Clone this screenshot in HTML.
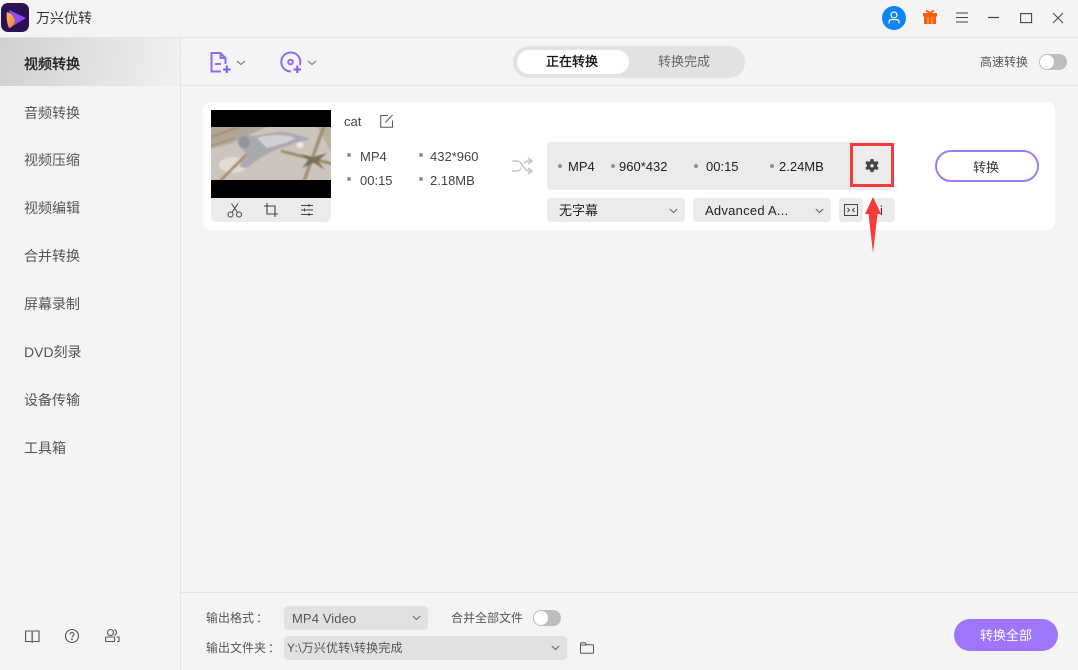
<!DOCTYPE html>
<html lang="zh-CN"><head><meta charset="utf-8"><title>万兴优转</title>
<style>
html,body{margin:0;padding:0}
body{width:1078px;height:670px;overflow:hidden;background:#f4f4f4;position:relative;font-family:"Liberation Sans","Noto Sans CJK SC",sans-serif;color:#333}
.a{position:absolute;white-space:nowrap}
.t{position:absolute;white-space:nowrap;font-size:13px;line-height:18px}
.nav{position:absolute;left:24px;font-size:14px;line-height:20px;color:#555;white-space:nowrap}
.dot{position:absolute;width:4px;height:4px;border-radius:50%;background:#909090}
.sel{position:absolute;background:#ebebeb;border-radius:4px}
svg{position:absolute;overflow:visible}
</style></head><body>

<div class="a" style="left:0;top:37px;width:1078px;height:1px;background:#e3e3e3"></div>
<div class="a" style="left:180px;top:38px;width:1px;height:632px;background:#e3e3e3"></div>
<div class="a" style="left:181px;top:85px;width:897px;height:1px;background:#e3e3e3"></div>
<div class="a" style="left:181px;top:592px;width:897px;height:1px;background:#e3e3e3"></div>
<div class="a" style="left:0;top:38px;width:180px;height:48px;background:linear-gradient(100deg,#d0d0d0,#e4e4e4 60%,#f0f0f0)"></div>

<!-- logo -->
<svg style="left:1px;top:3px" width="28" height="29" viewBox="0 0 28 29">
<defs><linearGradient id="lg" x1="0" y1="0" x2="1" y2="1"><stop offset="0" stop-color="#ffc05a"/><stop offset="1" stop-color="#f07a3c"/></linearGradient></defs>
<rect width="28" height="29" rx="7" fill="#2b1150"/>
<path d="M8 7 L25 15 L10 24 Z" fill="#8c4cf0"/>
<path d="M6 9 C11 11 14 15 14 18 C13 22 10 25 8 25 C6 20 5 14 6 9Z" fill="url(#lg)"/>
</svg>
<div class="a" style="left:36px;top:8px;font-size:14px;line-height:20px;color:#333">万兴优转</div>

<!-- window controls -->
<div class="a" style="left:882px;top:6px;width:24px;height:24px;border-radius:50%;background:#0d85f5"></div>
<svg style="left:882px;top:6px" width="24" height="24" fill="none" stroke="#fff" stroke-width="1.2"><circle cx="12" cy="9" r="3"/><path d="M7 17.500v-1.500c0-1.500 1-2.400 2.500-2.400h5c1.500 0 2.500 .9 2.500 2.400v1.500"/></svg>
<svg style="left:923px;top:10px" width="15" height="14"><path d="M0 3h14v3.500H0z" fill="#f4600c"/><path d="M1 6.500h12V14H1z" fill="#f4600c"/><path d="M3 .5l4 2.500 4-2.500" fill="none" stroke="#f4600c" stroke-width="1.800"/><path d="M5 7v7M9 7v7" stroke="#ffb070" stroke-width="1"/></svg>
<svg style="left:955px;top:11px" width="14" height="14" stroke="#444" stroke-width="1.1"><path d="M1 2h12M1 6.500h12M1 11h12"/></svg>
<svg style="left:988px;top:17px" width="12" height="2" stroke="#444" stroke-width="1.2"><path d="M0 .5h11"/></svg>
<svg style="left:1020px;top:13px" width="12" height="10" fill="none" stroke="#444" stroke-width="1.1"><rect x=".6" y=".6" width="11" height="9"/></svg>
<svg style="left:1052px;top:12px" width="12" height="12" stroke="#444" stroke-width="1"><path d="M1 1l10 10M11 1L1 11"/></svg>

<!-- side nav -->
<div class="nav" style="top:54px;color:#222;-webkit-text-stroke:.4px #222">视频转换</div>
<div class="nav" style="top:103px">音频转换</div>
<div class="nav" style="top:150px">视频压缩</div>
<div class="nav" style="top:198px">视频编辑</div>
<div class="nav" style="top:246px">合并转换</div>
<div class="nav" style="top:294px">屏幕录制</div>
<div class="nav" style="top:342px">DVD刻录</div>
<div class="nav" style="top:390px">设备传输</div>
<div class="nav" style="top:438px">工具箱</div>

<svg style="left:25px;top:630px" width="15" height="14" fill="none" stroke="#555" stroke-width="1.1"><path d="M.6 1h13.4v10.500H.6z"/><path d="M7.200 0.500V13" stroke="#777" stroke-width="1.600"/></svg>
<svg style="left:65px;top:629px" width="14" height="14" fill="none" stroke="#555" stroke-width="1.1"><circle cx="7" cy="7" r="6.500"/><path d="M5 5.500c0-1.200 1-2 2-2s2 .8 2 1.900c0 1.400-2 1.500-2 3"/><circle cx="7" cy="10.300" r=".4"/></svg>
<svg style="left:105px;top:629px" width="15" height="14" fill="none" stroke="#555" stroke-width="1.1"><circle cx="5.500" cy="3.500" r="3"/><path d="M9.500 .7a3 3 0 0 1 0 5.600"/><rect x=".6" y="8" width="9" height="4.500" rx=".6"/><path d="M11.500 8h2.500v4.500h-2"/></svg>

<!-- toolbar -->
<svg style="left:210px;top:51px" width="22" height="22" fill="none" stroke="#8e6cf5" stroke-width="2"><path d="M11 20.500H1.500V2H10.500L15.500 7V13M10.500 2V7H15.500"/><path d="M5 13H11"/><path d="M13 18.500h7.500M16.800 14.500v7.500" stroke="#7c5cf5"/></svg>
<svg style="left:236px;top:60px" width="10" height="6" fill="none" stroke="#777" stroke-width="1.100"><path d="M1 1l4 3.500L9 1"/></svg>
<svg style="left:280px;top:51px" width="22" height="22" fill="none" stroke="#8e6cf5" stroke-width="2"><path d="M11 20.500a9.500 9.500 0 1 1 8.800-6.500"/><circle cx="10.500" cy="11" r="2.300"/><path d="M13.500 18.500h7.500M17.300 14.500v7.500" stroke="#7c5cf5"/></svg>
<svg style="left:307px;top:60px" width="10" height="6" fill="none" stroke="#777" stroke-width="1.100"><path d="M1 1l4 3.500L9 1"/></svg>

<div class="a" style="left:513px;top:46px;width:232px;height:32px;border-radius:16px;background:#e2e2e2"></div>
<div class="a" style="left:517px;top:50px;width:112px;height:24px;border-radius:12px;background:#fff"></div>
<div class="a" style="left:516px;top:52px;width:112px;text-align:center;font-size:13px;line-height:20px;color:#111;-webkit-text-stroke:.35px #111">正在转换</div>
<div class="a" style="left:629px;top:52px;width:110px;text-align:center;font-size:13px;line-height:20px;color:#666">转换完成</div>
<div class="t" style="left:980px;top:53px;font-size:12px;color:#555">高速转换</div>
<div class="a" style="left:1039px;top:54px;width:28px;height:16px;border-radius:8px;background:#bdbdbd"></div>
<div class="a" style="left:1040px;top:55px;width:14px;height:14px;border-radius:50%;background:#fff"></div>

<!-- card -->
<div class="a" style="left:203px;top:102px;width:852px;height:128px;border-radius:8px;background:#fff"></div>
<div class="a" style="left:211px;top:110px;width:120px;height:88px;background:#000"></div>
<svg style="left:211px;top:127px;overflow:hidden" width="120" height="53" viewBox="0 0 120 53">
<defs><filter id="b" x="-5%" y="-5%" width="110%" height="110%"><feGaussianBlur stdDeviation=".7"/></filter></defs>
<g filter="url(#b)">
<rect x="-2" y="-2" width="124" height="57" fill="#cbc5bd"/>
<path d="M-2-2H60L20 16 -2 22z" fill="#b0a79a"/>
<path d="M105-2h17v30z" fill="#b9b0a0"/>
<ellipse cx="22" cy="38" rx="14" ry="8" fill="#e2dcd6"/>
<path d="M0 10L28 0" stroke="#a6906e" stroke-width="2.500"/>
<path d="M0 19L24 11" stroke="#a6906e" stroke-width="1.500"/>
<path d="M9 54L36 27" stroke="#a88f68" stroke-width="3"/>
<path d="M70 24L122 37" stroke="#a08c6c" stroke-width="3"/>
<path d="M93 54L113-1" stroke="#a3906f" stroke-width="3.500"/>
<path d="M90 27l12 3 14-4-9 8 7 9-11-7-12 5 6-8z" fill="#7e7055"/>
<path d="M27 14C30 8 37 7 42 9C50 9 60 5 70 5C80 5 90 9 98 11L97 13C92 14 88 15 84 16C76 20 68 21 60 25C52 29 42 36 35 41L29 40L30 35L37 27C33 25 28 20 27 14Z" fill="#a9a9b0"/>
<path d="M46 11C58 7 74 7 84 11C78 16 66 18 56 21Z" fill="#d2d0d2"/>
<circle cx="33" cy="15" r="6" fill="#94949c"/>
<ellipse cx="89" cy="18" rx="3.500" ry="3" fill="#eee8e0"/>
</g>
</svg>
<div class="a" style="left:211px;top:198px;width:120px;height:24px;background:#ebebeb;border-radius:0 0 5px 5px"></div>
<svg style="left:227px;top:203px" width="16" height="15" fill="none" stroke="#444" stroke-width="1"><circle cx="3.500" cy="11.500" r="2.500"/><circle cx="12" cy="11.500" r="2.500"/><path d="M5 9.500L11 .5M10.500 9.500L4.500 .5"/></svg>
<svg style="left:264px;top:203px" width="14" height="14" fill="none" stroke="#444" stroke-width="1.100"><path d="M3 0v11h11M0 3h11v11"/></svg>
<svg style="left:300px;top:203px" width="14" height="14" fill="none" stroke="#444" stroke-width="1"><path d="M1 2.500h12M1 7h12M1 11.500h12"/><path d="M9 1v3M4.500 5.500v3M9 10v3"/></svg>

<div class="t" style="left:344px;top:113px;font-size:13px;color:#444">cat</div>
<svg style="left:380px;top:114px" width="14" height="14" fill="none" stroke="#555" stroke-width="1"><path d="M8 1.500H.7v11.800h11.800V6.500"/><path d="M5.500 8.500L12.500 1"/></svg>

<div class="dot" style="left:347px;top:153px"></div><div class="t" style="left:360px;top:148px;color:#444">MP4</div>
<div class="dot" style="left:419px;top:153px"></div><div class="t" style="left:430px;top:148px;color:#444">432*960</div>
<div class="dot" style="left:347px;top:177px"></div><div class="t" style="left:360px;top:172px;color:#444">00:15</div>
<div class="dot" style="left:419px;top:177px"></div><div class="t" style="left:430px;top:172px;color:#444">2.18MB</div>

<svg style="left:512px;top:157px" width="21" height="18" fill="none" stroke="#c4c4c4" stroke-width="1.500"><path d="M0 4h5c3 0 4 2 6 5s3 5 6 5h3M0 14h5c2 0 3-1 4-2.500M12 6.500c1-1.500 2-2.500 5-2.500h3"/><path d="M16 1l4 3-4 3M16 11l4 3-4 3"/></svg>

<div class="a" style="left:547px;top:142px;width:347px;height:48px;border-radius:4px;background:#ebebeb"></div>
<div class="dot" style="left:558px;top:164px"></div><div class="t" style="left:568px;top:158px;color:#222">MP4</div>
<div class="dot" style="left:611px;top:164px"></div><div class="t" style="left:619px;top:158px;color:#222">960*432</div>
<div class="dot" style="left:694px;top:164px"></div><div class="t" style="left:706px;top:158px;color:#222">00:15</div>
<div class="dot" style="left:770px;top:164px"></div><div class="t" style="left:779px;top:158px;color:#222">2.24MB</div>

<svg style="left:865px;top:159px" width="14" height="14" viewBox="0 0 14 14"><path d="M5.600 0h2.800l.4 2 1.600.8 1.900-.8 1.300 2.400-1.500 1.300v1.700l1.500 1.300-1.300 2.400-1.900-.8-1.600.8-.4 2H5.600l-.4-2-1.600-.8-1.900.8L.4 8.700l1.500-1.300V5.700L.4 4.400l1.300-2.400 1.900.8 1.600-.8z" fill="#444"/><circle cx="7" cy="6.800" r="1.700" fill="#ebebeb"/></svg>
<div class="a" style="left:850px;top:143px;width:38px;height:38px;border:3px solid #f73a3a"></div>

<div class="sel" style="left:547px;top:198px;width:138px;height:24px"></div>
<div class="t" style="left:559px;top:202px;color:#222">无字幕</div>
<svg style="left:669px;top:208px" width="9" height="6" fill="none" stroke="#666" stroke-width="1.100"><path d="M.8 1l3.700 3.500L8.200 1"/></svg>
<div class="sel" style="left:693px;top:198px;width:138px;height:24px"></div>
<div class="t" style="left:705px;top:202px;color:#222;letter-spacing:.25px">Advanced A...</div>
<svg style="left:815px;top:208px" width="9" height="6" fill="none" stroke="#666" stroke-width="1.100"><path d="M.8 1l3.700 3.500L8.200 1"/></svg>
<div class="sel" style="left:839px;top:198px;width:24px;height:24px"></div>
<svg style="left:844px;top:204px" width="14" height="12" fill="none" stroke="#444" stroke-width="1"><rect x=".5" y=".5" width="13" height="11"/><path d="M3.500 4l2 2-2 2M10.500 4l-2 2 2 2"/></svg>
<div class="sel" style="left:871px;top:198px;width:24px;height:24px"></div>
<div class="t" style="left:880px;top:202px;color:#333">i</div>

<svg style="left:865px;top:197px" width="16" height="56" viewBox="0 0 16 56"><path d="M8 0L16 17H12.500L8 56L3.500 17H0Z" fill="#f73a3a"/></svg>

<div class="a" style="left:935px;top:150px;width:100px;height:28px;border:2px solid #9d7cf8;border-radius:16px;background:#fff;text-align:center;font-size:13px;line-height:31px;color:#333"><span style="position:relative;left:-1px">转换</span></div>

<!-- footer -->
<div class="t" style="left:206px;top:609px;font-size:12px;color:#555">输出格式<span style="margin-left:2px">：</span></div>
<div class="sel" style="left:284px;top:606px;width:144px;height:24px;background:#e1e1e1"></div>
<div class="t" style="left:292px;top:610px;color:#555;letter-spacing:.1px">MP4 Video</div>
<svg style="left:412px;top:615px" width="9" height="6" fill="none" stroke="#666" stroke-width="1.100"><path d="M.8 1l3.700 3.500L8.200 1"/></svg>
<div class="t" style="left:451px;top:609px;font-size:12px;color:#555">合并全部文件</div>
<div class="a" style="left:533px;top:610px;width:28px;height:16px;border-radius:8px;background:#bdbdbd"></div>
<div class="a" style="left:534px;top:611px;width:14px;height:14px;border-radius:50%;background:#fff"></div>

<div class="t" style="left:206px;top:639px;font-size:12px;color:#555">输出文件夹<span style="margin-left:2px">：</span></div>
<div class="sel" style="left:284px;top:636px;width:283px;height:24px;background:#e1e1e1"></div>
<div class="t" style="left:287px;top:639px;font-size:12px;color:#555;letter-spacing:.2px">Y:\万兴优转\转换完成</div>
<svg style="left:551px;top:645px" width="9" height="6" fill="none" stroke="#666" stroke-width="1.100"><path d="M.8 1l3.700 3.500L8.200 1"/></svg>
<svg style="left:580px;top:642px" width="14" height="12" fill="none" stroke="#555" stroke-width="1"><path d="M.5 2c0-.8.5-1.300 1.200-1.300H5l1.500 2h6c.6 0 1 .4 1 1v6.500c0 .7-.4 1.100-1 1.100H1.700c-.7 0-1.200-.4-1.200-1.100z"/><path d="M.5 3h6"/></svg>
<div class="a" style="left:954px;top:619px;width:104px;height:32px;border-radius:16px;background:#9d76fb;color:#fff;text-align:center;font-size:13px;line-height:33px">转换全部</div>

</body></html>
